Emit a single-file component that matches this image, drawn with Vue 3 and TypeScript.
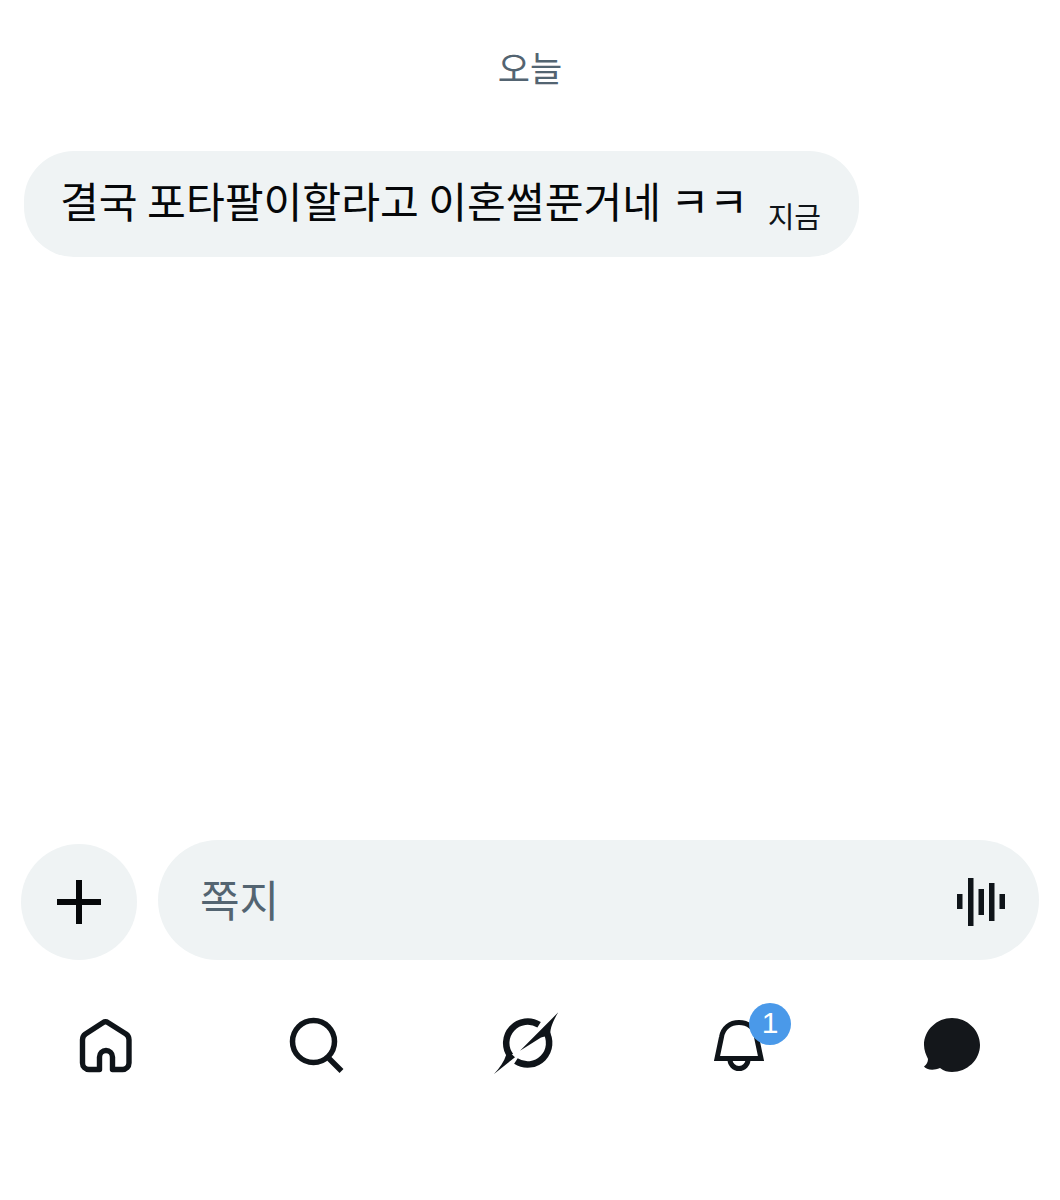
<script setup lang="ts">
const message = { text: '결국 포타팔이할라고 이혼썰푼거네 ㅋㅋ', time: '지금' }
const unread: number = 1
</script>

<template>
  <div class="screen">
    <main class="thread">
      <div class="day">오늘</div>
      <div class="bubble">
        <span class="msg">{{ message.text }}</span>
        <span class="time">{{ message.time }}</span>
      </div>
    </main>

    <div class="composer">
      <button class="add" aria-label="추가">
        <svg width="46" height="46" viewBox="0 0 46 46">
          <path d="M23 1v44M1 23h44" stroke="#050709" stroke-width="6" fill="none" />
        </svg>
      </button>
      <div class="field">
        <span class="placeholder">쪽지</span>
        <svg class="wave" width="50" height="54" viewBox="0 0 50 54">
          <g fill="#0f1419">
            <rect x="1" y="21" width="5.500" height="15" />
            <rect x="12" y="5" width="5.500" height="48" />
            <rect x="22.500" y="16" width="5.500" height="26" />
            <rect x="33" y="10" width="5.500" height="38" />
            <rect x="43.500" y="21" width="5.500" height="15" />
          </g>
        </svg>
      </div>
    </div>

    <nav class="tabs">
      <div class="tab">
        <svg width="56" height="56" viewBox="0 0 56 56" fill="none" stroke="#0f1419" stroke-width="5.400" stroke-linejoin="round">
          <path d="M27.500 4.800a4 4 0 0 1 2.300.7L48 17a7 7 0 0 1 3 5.800V46a6.500 6.500 0 0 1-6.500 6.500H34.500V40a6.500 6.500 0 0 0-13 0V52.500H11A6.500 6.500 0 0 1 4.500 46V22.800a7 7 0 0 1 3-5.800L25.200 5.500a4 4 0 0 1 2.300-.7z" />
        </svg>
      </div>
      <div class="tab">
        <svg width="56" height="56" viewBox="0 0 56 56" fill="none" stroke="#0f1419" stroke-width="5.500">
          <circle cx="24.500" cy="24.500" r="21" />
          <path d="M40 41.500 52.500 54" />
        </svg>
      </div>
      <div class="tab">
        <svg width="68" height="68" viewBox="0 0 68 68" fill="none">
          <!-- ring halves either side of the needle -->
          <path d="M45.100 13.800A21.500 21.500 0 0 0 16.400 44.800" stroke="#0f1419" stroke-width="6.500" />
          <path d="M21.900 50A21.500 21.500 0 0 0 51.500 20" stroke="#0f1419" stroke-width="6.500" />
          <path d="M64.300 1.300 26 39.700 47 26.500 56.500 24C55.500 18 59.500 9 64.300 1.300z" fill="#0f1419" />
          <path d="M0 63C5.500 57 10 51 12.500 43L17.500 43 21 46.300z" fill="#0f1419" />
        </svg>
      </div>
      <div class="tab bell">
        <svg width="56" height="56" viewBox="0 0 56 56" fill="none" stroke="#0f1419" stroke-width="5">
          <path d="M6 41.500 10.500 20C12 11 19 5.500 28 5.500S44 11 45.500 20L50 41.500z" />
          <path d="M19 42.500a9 9 0 0 0 18 0" />
        </svg>
        <span class="badge">{{ unread }}</span>
      </div>
      <div class="tab">
        <svg width="60" height="58" viewBox="0 0 60 58">
          <path d="M32 2C17 2 4 14 4 29C4 34 6 39 8 43C8 46 6.500 49 4 50.500C6 53.500 13 55 20 52C24 55 28 56 32 56C47 56 60 44 60 29S47 2 32 2z" fill="#14171b" />
        </svg>
      </div>
    </nav>
  </div>
</template>

<style>
html, body { margin: 0; background: #fff; }
</style>

<style scoped>
.screen {
  width: 1060px;
  height: 1200px;
  display: flex;
  flex-direction: column;
  font-family: "Noto Sans CJK KR", "Noto Sans", sans-serif;
  color: #0f1419;
  overflow: hidden;
}
.thread {
  flex: 1;
  padding: 45px 24px 0;
}
.day {
  text-align: center;
  font-size: 35px;
  line-height: 44px;
  color: #536471;
}
.bubble {
  width: 835px;
  height: 106px;
  box-sizing: border-box;
  margin-top: 62px;
  padding: 0 38px 0 36px;
  border-radius: 50px;
  background: #eff3f4;
  display: flex;
  align-items: center;
  justify-content: space-between;
  white-space: nowrap;
}
.msg {
  font-size: 42.200px;
  line-height: 50px;
  margin-top: -8px;
  color: #050709;
}
.time {
  font-size: 29px;
  line-height: 34px;
  margin-top: 22px;
}
.composer {
  display: flex;
  align-items: center;
  gap: 21px;
  padding: 0 21px;
}
.add {
  width: 116px;
  height: 116px;
  flex: none;
  margin-top: 4px;
  padding: 0;
  border: 0;
  border-radius: 50%;
  background: #eff3f4;
  display: flex;
  align-items: center;
  justify-content: center;
}
.field {
  flex: 1;
  height: 120px;
  box-sizing: border-box;
  padding: 0 33px 0 42px;
  border-radius: 60px;
  background: #eff3f4;
  display: flex;
  align-items: center;
  justify-content: space-between;
}
.placeholder {
  font-size: 43px;
  line-height: 50px;
  margin-top: -4px;
  color: #536471;
}
.tabs {
  display: grid;
  grid-template-columns: repeat(5, 211px);
  height: 240px;
  box-sizing: border-box;
  padding-top: 56px;
}
.tab {
  height: 58px;
  display: flex;
  align-items: center;
  justify-content: center;
  position: relative;
}
.badge {
  position: absolute;
  left: 116px;
  top: -13px;
  width: 42px;
  height: 42px;
  border-radius: 50%;
  background: #4a99e9;
  color: #fff;
  font-family: "Liberation Sans", sans-serif;
  font-size: 30px;
  line-height: 40px;
  text-align: center;
}
</style>
